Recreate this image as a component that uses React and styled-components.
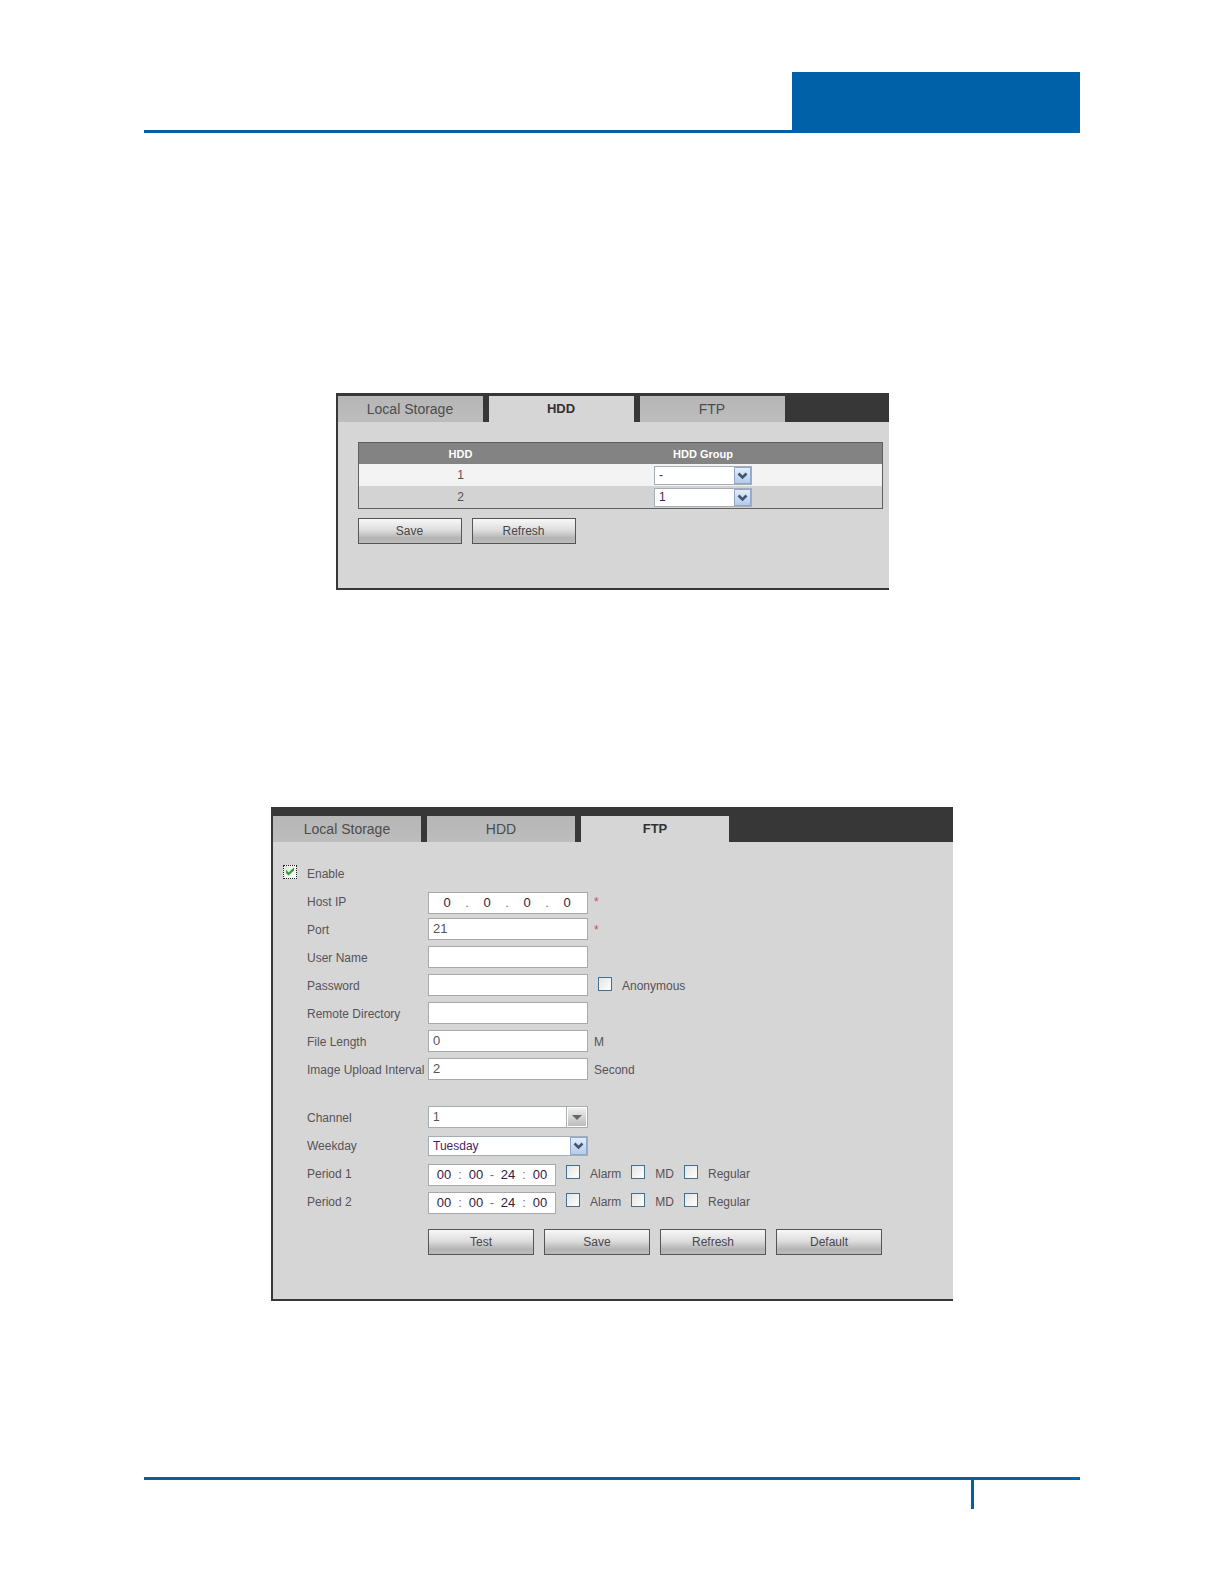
import React, { useState } from 'react'
import styled, { createGlobalStyle, css } from 'styled-components'

const GlobalStyle = createGlobalStyle`
  * {
    box-sizing: border-box;
  }

  body {
    margin: 0;
    background: #fff;
    color: #565256;
    font: 12px/16px "Liberation Sans", Arial, sans-serif;
  }

  button, input, select {
    margin: 0;
    color: inherit;
    font: inherit;
  }
`

const Page = styled.div`
  display: flex;
  flex-direction: column;
  min-height: 100vh;
  padding: 72px 144px 75px;
`

const Header = styled.header`
  display: flex;
  justify-content: flex-end;
  border-bottom: 3px solid #0060a8;
`

const HeaderBlock = styled.div`
  width: 288px;
  height: 58px;
  background: #0060a8;
`

const Footer = styled.footer`
  display: flex;
  justify-content: flex-end;
  margin-top: auto;
  border-top: 3px solid #0060a8;
`

const PageNumber = styled.div`
  width: 109px;
  height: 29px;
  border-left: 3px solid #0060a8;
`

const Panel = styled.section`
  width: 100%;
  max-width: ${props => props.$width}px;
  margin: ${props => props.$top}px auto 0;
  border: solid #373737;
  border-width: 0 0 2px 2px;
  background: #d6d6d6;
`

const TabBar = styled.div`
  display: flex;
  gap: 6px;
  padding-top: ${props => props.$top}px;
  background: #373737;
`

const Tab = styled.button`
  width: ${props => props.$width}px;
  height: 26px;
  padding: 0;
  border: 0;
  background: linear-gradient(#b6b6b6, #bdbdbd);
  color: #4c4c4c;
  font-size: 14px;

  ${props => props.$active && css`
    background: #d6d6d6;
    color: #373033;
    font-size: 13px;
    font-weight: bold;
  `}
`

const HddBody = styled.div`
  padding: 20px 6px 44px 20px;
`

const Table = styled.table`
  width: 100%;
  border: 1px solid #5c605f;
  border-collapse: separate;
  border-spacing: 0;
  table-layout: fixed;
`

const HeadCell = styled.th`
  width: ${props => props.$width || 'auto'};
  height: 21px;
  padding: 0 ${props => props.$end || 0}px 0 0;
  background: #828382;
  color: #fff;
  font-size: 11px;
`

const Row = styled.tr`
  background: ${props => props.$light ? '#f3f3f3' : '#d3d3d3'};
`

const Cell = styled.td`
  height: 22px;
  padding: 0 ${props => props.$end || 0}px 0 0;
  text-align: center;
`

const SelectWrapper = styled.span`
  position: relative;
  display: inline-block;
  width: ${props => props.$width}px;
  height: ${props => props.$height}px;
  vertical-align: top;

  svg {
    position: absolute;
    top: 1px;
    right: 1px;
    pointer-events: none;
  }
`

const SelectBox = styled.select`
  display: block;
  width: 100%;
  height: 100%;
  padding: 0 22px 0 4px;
  border: 1px solid #a5acb2;
  border-radius: 0;
  background: #fff;
  color: ${props => props.$grey ? 'inherit' : '#4b1f5e'};
  appearance: none;
`

const ButtonRow = styled.div`
  display: flex;
  gap: 10px;
  margin-top: ${props => props.$top}px;
  padding-left: ${props => props.$indent || 0}px;
`

const Button = styled.button`
  width: ${props => props.$width}px;
  height: 26px;
  padding: 0;
  border: 1px solid #555;
  background: linear-gradient(#f8f8f8, #dedede 45%, #b4b4b4 80%, #bcbcbc);
  color: #48454b;
`

const Form = styled.form`
  padding: 18px 0 44px;
`

const EnableRow = styled.div`
  display: flex;
  align-items: center;
  height: 28px;
`

const FormRow = styled.div`
  display: flex;
  height: 28px;
  margin-top: ${props => props.$spaced ? 20 : 0}px;
  padding-left: 34px;
  line-height: 28px;
`

const FieldLabel = styled.label`
  flex: none;
  width: 121px;
  white-space: nowrap;
`

const TextInput = styled.input`
  width: 160px;
  height: 22px;
  margin-top: 2px;
  padding: 0 4px;
  border: 1px solid #a9a9a9;
  border-radius: 0;
  background: #fff;
  font-size: 13px;
`

const Control = styled.div`
  padding-top: ${props => props.$top}px;
  line-height: 16px;
`

const Note = styled.span`
  margin-left: 6px;
`

const Required = styled.span`
  margin-left: 6px;
  color: #c4506c;
`

const Segments = styled.div`
  display: flex;
  align-items: center;
  width: ${props => props.$width}px;
  height: 22px;
  margin-top: 4px;
  padding-left: ${props => props.$start}px;
  border: 1px solid #a9a9a9;
  background: #fff;
  color: #35203f;
  font-size: 13px;
  line-height: 20px;
`

const Segment = styled.input`
  width: ${props => props.$size}px;
  height: 20px;
  padding: 0;
  border: 0;
  background: transparent;
  text-align: center;
`

const Separator = styled.span`
  width: ${props => props.$size}px;
  color: #77707a;
  text-align: center;
`

const CheckLabel = styled.label`
  display: flex;
  align-items: center;
  gap: 10px;
  height: 28px;
  margin-left: 10px;
  line-height: 16px;
`

const CheckWrapper = styled.span`
  position: relative;
  width: 14px;
  height: 14px;
  margin-bottom: 4px;

  svg {
    position: absolute;
    top: 0;
    left: 0;
    pointer-events: none;
  }
`

const CheckBox = styled.input`
  display: block;
  width: 14px;
  height: 14px;
  border: 1px ${props => props.$focused ? 'dotted #222' : 'solid #44708f'};
  background: linear-gradient(135deg, #e4e5e1, #fff);
  appearance: none;
`

function BlueArrow ({ height }) {
  return (
    <svg width="17" height={height} viewBox={`0 0 17 ${height}`}>
      <defs>
        <linearGradient id="blueArrow" x1="0" y1="0" x2="0" y2="1">
          <stop offset="0" stopColor="#e4eefb" />
          <stop offset="1" stopColor="#b4cae8" />
        </linearGradient>
      </defs>
      <rect x="0.5" y="0.5" width="16" height={height - 1} fill="url(#blueArrow)" stroke="#91a9c8" />
      <path d="M4.5 6.5l4 4 4-4" fill="none" stroke="#3e5672" strokeWidth="2.6" />
    </svg>
  )
}

function GreyArrow () {
  return (
    <svg width="21" height="20" viewBox="0 0 21 20">
      <defs>
        <linearGradient id="greyArrow" x1="0" y1="0" x2="0" y2="1">
          <stop offset="0" stopColor="#eeeeee" />
          <stop offset="1" stopColor="#bdbdbd" />
        </linearGradient>
      </defs>
      <path d="M0.5 0v20" stroke="#b0b0b0" />
      <rect x="2" y="1" width="18" height="18" fill="url(#greyArrow)" />
      <path d="M6 8h10l-5 5z" fill="#666" />
    </svg>
  )
}

function Select ({ width, height, grey, options, ...rest }) {
  return (
    <SelectWrapper $width={width} $height={height}>
      <SelectBox $grey={grey} {...rest}>
        {options.map(option => <option key={option}>{option}</option>)}
      </SelectBox>
      {grey ? <GreyArrow /> : <BlueArrow height={height - 2} />}
    </SelectWrapper>
  )
}

function Check ({ children, ...rest }) {
  return (
    <CheckLabel>
      <CheckWrapper>
        <CheckBox type="checkbox" {...rest} />
        {rest.checked && (
          <svg width="14" height="14" viewBox="0 0 14 14">
            <path d="M3 4.5v3.5l2.5 2.5L11 5.500V2.500L5.500 7.500z" fill="#2ea038" />
          </svg>
        )}
      </CheckWrapper>
      {children}
    </CheckLabel>
  )
}

function Tabs ({ active, width, top }) {
  return (
    <TabBar role="tablist" $top={top}>
      {['Local Storage', 'HDD', 'FTP'].map(name => (
        <Tab
          key={name}
          type="button"
          role="tab"
          aria-selected={name === active}
          $active={name === active}
          $width={width}
        >
          {name}
        </Tab>
      ))}
    </TabBar>
  )
}

function SegmentedField ({ id, name, width, start, size, values, separators }) {
  return (
    <Segments $width={width} $start={start}>
      {values.map((value, i) => (
        <React.Fragment key={i}>
          {i > 0 && <Separator $size={size}>{separators[i - 1]}</Separator>}
          <Segment
            id={i === 0 ? id : undefined}
            aria-label={`${name} ${i + 1}`}
            defaultValue={value}
            $size={size}
          />
        </React.Fragment>
      ))}
    </Segments>
  )
}

function Field ({ id, label, value, children }) {
  return (
    <FormRow>
      <FieldLabel htmlFor={id}>{label}</FieldLabel>
      <TextInput id={id} defaultValue={value} />
      {children}
    </FormRow>
  )
}

function Period ({ number }) {
  const name = `Period ${number}`
  return (
    <FormRow>
      <FieldLabel htmlFor={`period${number}`}>{name}</FieldLabel>
      <SegmentedField
        id={`period${number}`}
        name={name}
        width={128}
        start={7}
        size={16}
        values={['00', '00', '24', '00']}
        separators={[':', '-', ':']}
      />
      <Check>Alarm</Check>
      <Check>MD</Check>
      <Check>Regular</Check>
    </FormRow>
  )
}

function HddPanel () {
  return (
    <Panel $width={553} $top={260}>
      <Tabs active="HDD" width={145} top={3} />
      <HddBody>
        <Table>
          <thead>
            <tr>
              <HeadCell $width="39%">HDD</HeadCell>
              <HeadCell $end={38}>HDD Group</HeadCell>
            </tr>
          </thead>
          <tbody>
            {['-', '1'].map((group, i) => (
              <Row key={group} $light={i === 0}>
                <Cell>{i + 1}</Cell>
                <Cell $end={38}>
                  <Select
                    width={98}
                    height={19}
                    options={['-', '1', '2']}
                    defaultValue={group}
                    aria-label={`HDD ${i + 1} group`}
                  />
                </Cell>
              </Row>
            ))}
          </tbody>
        </Table>
        <ButtonRow $top={9}>
          <Button $width={104}>Save</Button>
          <Button $width={104}>Refresh</Button>
        </ButtonRow>
      </HddBody>
    </Panel>
  )
}

function FtpPanel () {
  const [enabled, setEnabled] = useState(true)

  return (
    <Panel $width={682} $top={217}>
      <Tabs active="FTP" width={148} top={9} />
      <Form onSubmit={e => e.preventDefault()}>
        <EnableRow>
          <Check checked={enabled} onChange={e => setEnabled(e.target.checked)} $focused>Enable</Check>
        </EnableRow>
        <FormRow>
          <FieldLabel htmlFor="host">Host IP</FieldLabel>
          <SegmentedField
            id="host"
            name="Host IP"
            width={160}
            start={8}
            size={20}
            values={['0', '0', '0', '0']}
            separators={['.', '.', '.']}
          />
          <Required>*</Required>
        </FormRow>
        <Field id="port" label="Port" value="21"><Required>*</Required></Field>
        <Field id="user" label="User Name" />
        <Field id="password" label="Password"><Check>Anonymous</Check></Field>
        <Field id="directory" label="Remote Directory" />
        <Field id="length" label="File Length" value="0"><Note>M</Note></Field>
        <Field id="interval" label="Image Upload Interval" value="2"><Note>Second</Note></Field>
        <FormRow $spaced>
          <FieldLabel htmlFor="channel">Channel</FieldLabel>
          <Control $top={2}>
            <Select id="channel" width={160} height={22} options={['1', '2', '3', '4']} grey />
          </Control>
        </FormRow>
        <FormRow>
          <FieldLabel htmlFor="weekday">Weekday</FieldLabel>
          <Control $top={4}>
            <Select
              id="weekday"
              width={160}
              height={20}
              options={['Sunday', 'Monday', 'Tuesday', 'Wednesday', 'Thursday', 'Friday', 'Saturday']}
              defaultValue="Tuesday"
            />
          </Control>
        </FormRow>
        <Period number={1} />
        <Period number={2} />
        <ButtonRow $top={13} $indent={155}>
          {['Test', 'Save', 'Refresh', 'Default'].map(name => (
            <Button key={name} type="button" $width={106}>{name}</Button>
          ))}
        </ButtonRow>
      </Form>
    </Panel>
  )
}

function App () {
  return (
    <>
      <GlobalStyle />
      <Page>
        <Header>
          <HeaderBlock />
        </Header>
        <HddPanel />
        <FtpPanel />
        <Footer>
          <PageNumber />
        </Footer>
      </Page>
    </>
  )
}

export default App
